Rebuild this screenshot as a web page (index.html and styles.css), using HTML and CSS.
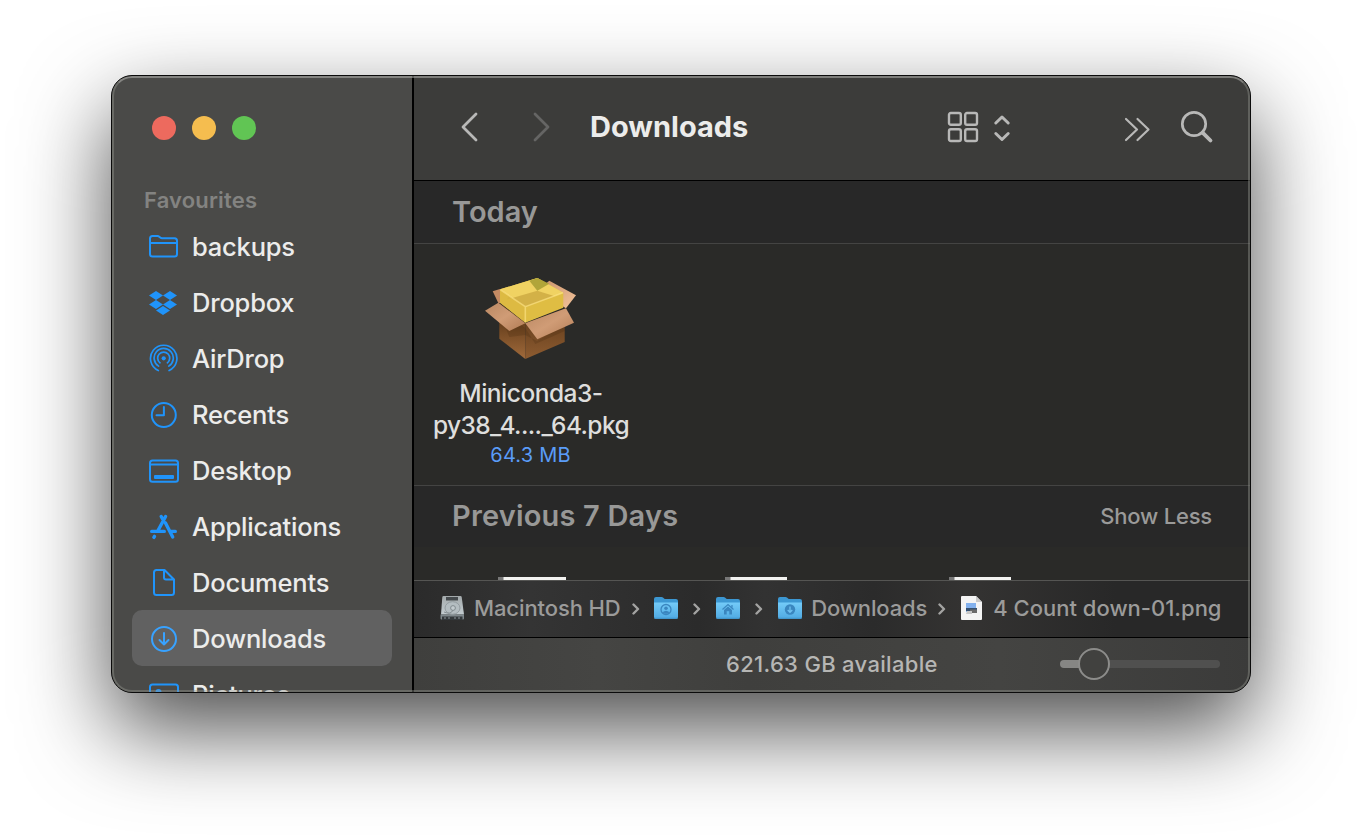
FILE: index.html
```
<!DOCTYPE html>
<html lang="en">
<head>
<meta charset="utf-8">
<title>Downloads</title>
<link rel="stylesheet" href="styles.css">
</head>
<body>
<svg class="defs" width="0" height="0" aria-hidden="true">
  <defs>
    <linearGradient id="folder-front" x1="0" y1="0" x2="0" y2="1"><stop offset="0" stop-color="#74cbf8"/><stop offset="1" stop-color="#4fa9e2"/></linearGradient>
    <linearGradient id="flap" x1="0" y1="0" x2="1" y2="1"><stop offset="0" stop-color="#b98762"/><stop offset=".5" stop-color="#d09c76"/><stop offset="1" stop-color="#b17b54"/></linearGradient>
    <linearGradient id="flap-back" x1="0" y1="0" x2="1" y2="1"><stop offset="0" stop-color="#c8926a"/><stop offset="1" stop-color="#f3c39b"/></linearGradient>
    <linearGradient id="box-left" x1="0" y1="0" x2="0" y2="1"><stop offset=".4" stop-color="#6c431f"/><stop offset="1" stop-color="#a06a3b"/></linearGradient>
    <linearGradient id="box-right" x1="0" y1="0" x2="0" y2="1"><stop offset=".3" stop-color="#6a421f"/><stop offset="1" stop-color="#8e5c31"/></linearGradient>
    <linearGradient id="drive" x1="0" y1="0" x2="0" y2="1"><stop offset="0" stop-color="#a3a9ab"/><stop offset="1" stop-color="#c3ccd0"/></linearGradient>
    <symbol id="folder" viewBox="0 0 26 26">
      <path d="M1 4a2 2 0 0 1 2-2h5.500q1 0 1.800.8l.8.700q.6.500 1.500.500H23a2 2 0 0 1 2 2v4H1z" fill="#3c97d2"/>
      <path d="M1 7.500h24V22a2 2 0 0 1-2 2H3a2 2 0 0 1-2-2z" fill="url(#folder-front)"/>
      <path d="M1.500 23.300h23" stroke="#3f93c9" stroke-width="1"/>
    </symbol>
  </defs>
</svg>
<main class="window">
  <aside class="sidebar">
    <div class="lights"><i class="red"></i><i class="yellow"></i><i class="green"></i></div>
    <h2 class="side-title">Favourites</h2>
    <ul class="places">
      <li><svg viewBox="0 0 30 30"><path d="M1 22V6.500q0-2.500 2.500-2.500h5q1 0 1.800.7l1 .9q.7.600 1.700.600h12.500q2.500 0 2.500 2.500V22q0 2.500-2.500 2.500h-22Q1 24.500 1 22zM1 11h27"/></svg><span>backups</span></li>
      <li><svg viewBox="0 0 30 30" class="solid"><path d="M7 3l7 4.500-7 4.500-7-4.500zM21 3l7 4.500-7 4.500-7-4.500zM7 12l7 4.500L7 21l-7-4.500zM21 12l7 4.500-7 4.500-7-4.500zM14 18l7 4.500-7 4.500-7-4.500z"/></svg><span>Dropbox</span></li>
      <li><svg viewBox="0 0 30 30" class="thin"><path d="M9.300 26.500A13.200 13.200 0 1 1 20.100 26.500M9.600 22.100A9.600 9.600 0 1 1 19.800 22.100M11 18.800A6 6 0 1 1 18.400 18.800"/><circle cx="14.700" cy="14.300" r="2.100" class="dot"/></svg><span>AirDrop</span></li>
      <li><svg viewBox="0 0 30 30"><circle cx="14.800" cy="15" r="12"/><path d="M14.900 7v8.300H7.500"/></svg><span>Recents</span></li>
      <li><svg viewBox="0 0 30 30"><rect x="1" y="4.500" width="28" height="21.200" rx="2.500"/><path d="M1 8.500h28"/><rect x="5" y="19" width="20" height="4" rx="1" class="dot"/></svg><span>Desktop</span></li>
      <li><svg viewBox="0 0 30 30" class="bold"><path d="M16.600 4.500L8.600 19.200M12.200 4.500L14.700 9M2.700 19.400h12.600M21.300 19.400h5M16.500 11L23.700 25M5.500 24.400l-.6 1"/></svg><span>Applications</span></li>
      <li><svg viewBox="0 0 30 30"><path d="M15.500 2H7.500Q5 2 5 4.500v20Q5 27 7.500 27h15q2.500 0 2.500-2.500v-13zM15 2v7.500q0 2 2 2h8"/></svg><span>Documents</span></li>
      <li class="selected"><svg viewBox="0 0 30 30"><circle cx="15" cy="15" r="12"/><path d="M15 9v11.500M10.500 16l4.500 4.500 4.500-4.500"/></svg><span>Downloads</span></li>
      <li><svg viewBox="0 0 30 30"><rect x="1" y="4.500" width="28" height="21" rx="2.500"/><circle cx="9.500" cy="12" r="3" class="dot"/></svg><span>Pictures</span></li>
    </ul>
  </aside>
  <section class="content">
    <header class="toolbar">
      <svg class="back" width="20" height="32" viewBox="0 0 20 32"><path d="M17 3L4 16l13 13"/></svg>
      <svg class="forward" width="20" height="32" viewBox="0 0 20 32"><path d="M3 3l13 13L3 29"/></svg>
      <h1>Downloads</h1>
      <svg class="view" width="64" height="32" viewBox="0 0 64 32"><g><rect x="2" y="2" width="11.800" height="11.800" rx="1.800"/><rect x="18.200" y="2" width="11.800" height="11.800" rx="1.800"/><rect x="2" y="18.200" width="11.800" height="11.800" rx="1.800"/><rect x="18.200" y="18.200" width="11.800" height="11.800" rx="1.800"/></g><path d="M48.800 12L55 6l6.200 6M48.800 22.500L55 28.500l6.200-6"/></svg>
      <svg class="more" width="28" height="28" viewBox="0 0 28 28"><path d="M3 4l11 10.500L3 25M14.500 4l11 10.500-11 10.500"/></svg>
      <svg class="search" width="34" height="34" viewBox="0 0 34 34"><circle cx="14" cy="14" r="11.700"/><path d="M22.600 22.600l7.900 7.900"/></svg>
    </header>
    <div class="group-head first"><h3>Today</h3></div>
    <div class="files">
      <figure class="file">
        <svg width="96" height="88" viewBox="0 0 96 88">
          <path d="M16.300 28l26 20.300V84l-26-20.300z" fill="url(#box-left)"/>
          <path d="M42.300 48.300l39.400-14.600V67L42.300 84z" fill="url(#box-right)"/>
          <path d="M9.700 16.300L17 14v14h-1.700z" fill="#c48b64"/>
          <path d="M66.300 5.700L93 20.300l-10 13-29-17.600z" fill="url(#flap-back)"/>
          <path d="M17 14.300L54.300 3l26 14.700v15l-38 15L17 27.700z" fill="#dfbd43"/>
          <path d="M17 14.300L54.300 3l26 14.700-38 14z" fill="#f0d262"/>
          <path d="M24 24.500l30.300-8.800L71 21l-28.700 10.700L26 21z" fill="#c9a63f" opacity=".75"/>
          <path d="M46.300 5.700l8-2.700 12 5.700-12 7z" fill="#aaa035" opacity=".9"/>
          <path d="M17 14.300l25.300 17.400v16L17 27.700z" fill="#dcb942" opacity=".7"/>
          <path d="M17.500 14.800l24.800 16.900 37.700-14M42.300 31.700v15.500" fill="none" stroke="#ffe68a" stroke-width="1.600" opacity=".6"/>
          <path d="M16.300 36l26 17 10 16 29.400-13v-6L54 66 42.300 60l-16 2z" fill="#3d2208" opacity=".2"/>
          <path d="M15.300 27.700l27 20.600-16 7.700L2 35.700z" fill="url(#flap)"/>
          <path d="M42.300 48.300l40.700-15 8 14.400-36.700 16.600z" fill="url(#flap)"/>
        </svg>
        <figcaption><span class="line-a">Miniconda3-</span><span class="line-b">py38_4...._64.pkg</span><small>64.3 MB</small></figcaption>
      </figure>
    </div>
    <div class="group-head second"><h3>Previous 7 Days</h3><a>Show Less</a></div>
    <div class="peek"><i></i><i></i><i></i></div>
    <nav class="path">
      <svg class="pi drive" viewBox="0 0 26 26"><path d="M4.500 1h17q1 0 1.200 1l2.300 17.500h-23L3.300 2q.2-1 1.200-1z" fill="url(#drive)"/><path d="M1.500 19.500h23.500v4q0 1-1 1H2.500q-1 0-1-1z" fill="#7f888c"/><path d="M3 21.500h20.500V25H3z" fill="#34393c"/><path d="M6 22v2M10 22v2M16 22v2M20 22v2" stroke="#8b9498"/><path d="M7 2h12v3.500H7z" fill="#454a4d"/><ellipse cx="13.500" cy="13" rx="7.500" ry="6.300" fill="#b4bdc1" stroke="#929b9f"/><circle cx="14" cy="13" r="2.400" fill="#c3cbcf" stroke="#7b8488" stroke-width=".9"/><path d="M5 17q7 3 9-2" fill="none" stroke="#858e92"/></svg>
      <span class="name hd">Macintosh HD</span><svg class="sep after-text" viewBox="0 0 8 14"><path d="M1.500 2.500L6 7l-4.500 4.500"/></svg>
      <svg class="pi" viewBox="0 0 26 26"><use href="#folder"/><circle cx="13" cy="14.500" r="5" fill="none" stroke="#3a86bf" stroke-width="1.300"/><circle cx="13" cy="13.200" r="1.800" fill="#3a86bf"/><path d="M9.500 17.200q3.500-3 7 0-3.500 3-7 0z" fill="#3a86bf"/></svg><svg class="sep" viewBox="0 0 8 14"><path d="M1.500 2.500L6 7l-4.500 4.500"/></svg>
      <svg class="pi" viewBox="0 0 26 26"><use href="#folder"/><path d="M7.500 14.500L13 9.500l5.500 5M17 10v2.500" fill="none" stroke="#3a86bf" stroke-width="1.200"/><path d="M9 15l4-3.500 4 3.500v4.500h-2.700v-3.300h-2.600v3.300H9z" fill="#3a86bf"/></svg><svg class="sep" viewBox="0 0 8 14"><path d="M1.500 2.500L6 7l-4.500 4.500"/></svg>
      <svg class="pi" viewBox="0 0 26 26"><use href="#folder"/><circle cx="13" cy="14.500" r="5.200" fill="#3a86bf"/><path d="M13 11.500v5.500M10.700 15l2.300 2.300 2.300-2.300" fill="none" stroke="#6fc0f0" stroke-width="1.300"/></svg>
      <span class="name dl">Downloads</span><svg class="sep after-text" viewBox="0 0 8 14"><path d="M1.500 2.500L6 7l-4.500 4.500"/></svg>
      <svg class="pi doc" viewBox="0 0 22 26"><path d="M0 2q0-1 1-1h14l6 6v17q0 1-1 1H1q-1 0-1-1z" fill="#f4f4f4"/><path d="M15 1l6 6h-6z" fill="#c9c9c9"/><path d="M5 8h10v9H5z" fill="#83b1ee"/><path d="M5 13h11v3H5z" fill="#36506f"/><path d="M9 14.500h7V18H9z" fill="#6b6b6b"/><path d="M6 16h5v3H5z" fill="#c7c7c7"/></svg>
      <span class="name png">4 Count down-01.png</span>
    </nav>
    <footer class="status"><span>621.63 GB available</span><div class="slider"><i></i></div></footer>
  </section>
</main>
</body>
</html>
```
FILE: styles.css
```
* { box-sizing: border-box; margin: 0; padding: 0; }
body { height: 840px; overflow: hidden; background: #fff; font-family: Inter, sans-serif; padding: 75px 0 0 111px; }
.defs { display: block; position: absolute; }
.window { position: relative; width: 1140px; height: 618px; border: 1px solid #0b0b0b; border-radius: 21px; overflow: hidden; display: flex; background: #2a2a28; box-shadow: 0 36px 88px rgba(0,0,0,.7); white-space: nowrap; }
.window::after { content: ""; position: absolute; inset: 0; border: 2px solid rgba(150,152,145,.42); border-top-color: rgba(190,190,185,.5); border-radius: 20px; pointer-events: none; }
.sidebar { width: 302px; flex: none; background: #4a4a48; border-right: 2px solid #000; overflow: hidden; }
.lights { display: flex; gap: 16px; padding: 40px 0 0 40px; }
.lights i { width: 24px; height: 24px; border-radius: 50%; }
.red { background: #ed6a5e; }
.yellow { background: #f5bd4f; }
.green { background: #61c554; }
.side-title { margin: 43px 0 1px 32px; height: 34px; font-size: 22px; line-height: 34px; font-weight: 600; letter-spacing: .17px; color: #838381; }
.places { list-style: none; padding: 0 20px; }
.places li { height: 56px; display: flex; align-items: center; gap: 13px; padding-left: 17px; border-radius: 10px; font-size: 25.500px; font-weight: 500; letter-spacing: -.2px; color: #ececeb; }
.places svg { width: 30px; height: 30px; margin-top: 2px; flex: none; fill: none; stroke: #2094fa; stroke-width: 2; stroke-linecap: round; stroke-linejoin: round; }
.places .solid { fill: #2094fa; stroke: none; }
.places .thin { stroke-width: 1.700; }
.places .bold { stroke-width: 3.400; }
.places .dot { fill: #2094fa; stroke: none; }
.places .selected { background: #616161; }
.selected svg { stroke: #38a2ff; }
.content { flex: 1; min-width: 0; display: flex; flex-direction: column; }
.toolbar { height: 105px; flex: none; background: #3c3c3a; border-bottom: 1px solid #000; display: flex; align-items: center; padding: 0 36px 2px 45px; }
.toolbar svg { fill: none; stroke: #b8b8b7; stroke-width: 2.400; stroke-linecap: round; stroke-linejoin: round; flex: none; }
.toolbar .back, .toolbar .forward { stroke-width: 2.800; }
.toolbar .forward { stroke: #656564; margin-left: 53px; }
.toolbar h1 { margin: 0 0 1px 38px; width: 357px; font-size: 29px; font-weight: 700; color: #ececeb; }
.toolbar .view path { stroke-width: 3; }
.toolbar .more { margin: 3px 29px 0 auto; stroke-width: 2.200; }
.toolbar .search { stroke-width: 2.700; }
.toolbar .search path { stroke-width: 3.800; }
.group-head { height: 63px; flex: none; background: #282828; display: flex; align-items: center; justify-content: space-between; padding: 0 38px 2px; border-bottom: 1px solid #444443; }
.group-head h3 { font-size: 29px; font-weight: 600; color: #989897; }
.files { height: 241px; flex: none; padding: 31px 0 0 17px; }
.file { width: 200px; text-align: center; }
.file svg { display: block; margin: 0 auto; }
.file figcaption { display: flex; flex-direction: column; align-items: center; margin-top: 14px; font-size: 24.500px; line-height: 32px; color: #dededd; font-weight: 500; }
.line-a { letter-spacing: -.5px; }
.line-b { letter-spacing: -.6px; }
.file small { margin-right: 1px; font-size: 20px; line-height: 28px; letter-spacing: .2px; color: #5a9cf8; font-weight: 400; }
.second { height: 62px; border-top: 1px solid #444443; border-bottom: 0; }
.second h3 { letter-spacing: .18px; }
.second a { font-size: 22px; font-weight: 500; letter-spacing: -.2px; color: #9a9a99; }
.peek { flex: 1; background: #2a2a28; display: flex; align-items: flex-end; padding-left: 84px; }
.peek i { height: 3px; width: 62px; margin-right: 162px; background: linear-gradient(90deg, #777 0 5px, #f2f2f0 6px); }
.peek i:first-child { width: 68px; margin-right: 159px; }
.path { height: 57px; flex: none; border-top: 1px solid #555553; display: flex; align-items: center; padding: 0 0 2px 25px; background: linear-gradient(90deg, #2b2b2b, #343434 14%, #2b2b2b 34%, #323232 42%, #2b2b2b 55%, #343332 66%, #282828 84%); font-size: 22px; font-weight: 500; color: #9b9b9a; }
.pi { width: 26px; height: 26px; flex: none; }
.pi.drive { margin-top: -1px; }
.pi.doc { width: 22px; margin-left: 2px; }
.name { flex: none; }
.hd { margin-left: 9px; letter-spacing: -.1px; }
.dl { margin-left: 8.500px; letter-spacing: -.12px; }
.png { margin-left: 10px; }
.sep { width: 8px; height: 14px; margin: 2px 14px 0; fill: none; stroke: #a3a3a2; stroke-width: 2.400; stroke-linecap: round; stroke-linejoin: round; flex: none; }
.sep.after-text { margin-left: 11px; margin-right: 13px; }
.status { height: 55px; flex: none; border-top: 1px solid #000; background: linear-gradient(90deg, #3f3f3d, #454543 22%, #3f3f3d 40%, #444442 70%, #3b3b3a); display: flex; align-items: center; padding: 0 30px 2px 312px; justify-content: space-between; font-size: 22px; font-weight: 500; letter-spacing: .32px; color: #b6b6b4; }
.slider { width: 160px; height: 8px; border-radius: 4px; background: linear-gradient(90deg, #868684 34px, #50504f 34px); display: flex; align-items: center; padding-left: 18px; }
.slider i { width: 32px; height: 32px; border: 2px solid #8c8c8a; border-radius: 50%; background: #41413f; }
```
